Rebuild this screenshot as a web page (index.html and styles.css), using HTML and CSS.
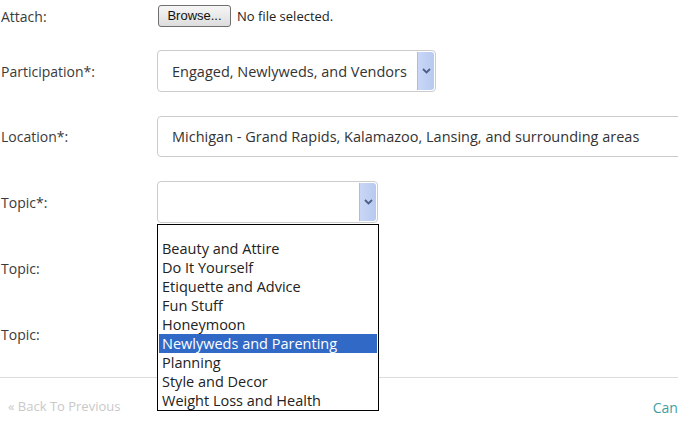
FILE: index.html
```html
<!DOCTYPE html>
<html lang="en">
<head>
    <meta charset="UTF-8">
    <title>Submit a Question</title>
    <link rel="stylesheet" href="styles.css">
</head>
<body>
    <div class="page">
        <form class="form">
            <div class="row row-attach">
                <label class="label">Attach:</label>
                <div class="file">
                    <span class="browse-btn">Browse...</span>
                    <span class="file-name">No file selected.</span>
                </div>
            </div>

            <div class="row">
                <label class="label">Participation*:</label>
                <div class="select select-participation">
                    <span class="select-value">Engaged, Newlyweds, and Vendors</span>
                    <span class="select-arrow">
                        <svg width="9" height="6" viewBox="0 0 9 6"><path d="M1 1 L4.5 4.5 L8 1" fill="none" stroke="#4b5f86" stroke-width="1.8"/></svg>
                    </span>
                </div>
            </div>

            <div class="row row-location">
                <label class="label">Location*:</label>
                <div class="input input-location">Michigan - Grand Rapids, Kalamazoo, Lansing, and surrounding areas</div>
            </div>

            <div class="row">
                <label class="label">Topic*:</label>
                <div class="topic-wrap">
                    <div class="select select-topic">
                        <span class="select-value"></span>
                        <span class="select-arrow">
                            <svg width="9" height="6" viewBox="0 0 9 6"><path d="M1 1 L4.5 4.5 L8 1" fill="none" stroke="#4b5f86" stroke-width="1.8"/></svg>
                        </span>
                    </div>
                    <ul class="dropdown">
                        <li class="empty"></li>
                        <li>Beauty and Attire</li>
                        <li>Do It Yourself</li>
                        <li>Etiquette and Advice</li>
                        <li>Fun Stuff</li>
                        <li>Honeymoon</li>
                        <li class="active">Newlyweds and Parenting</li>
                        <li>Planning</li>
                        <li>Style and Decor</li>
                        <li>Weight Loss and Health</li>
                    </ul>
                </div>
            </div>

            <div class="row">
                <label class="label">Topic:</label>
                <div class="select select-topic"></div>
            </div>

            <div class="row">
                <label class="label">Topic:</label>
                <div class="select select-topic"></div>
            </div>
        </form>

        <div class="footer">
            <a class="back-link">&laquo; Back To Previous</a>
            <a class="cancel-link">Cancel</a>
        </div>
    </div>
</body>
</html>
```

FILE: styles.css
```css
* {
    margin: 0;
    padding: 0;
    box-sizing: border-box;
}

body {
    font-family: 'Open Sans', 'Noto Sans', sans-serif;
    font-size: 14px;
    color: #333333;
    background: #ffffff;
    overflow: hidden;
}

.page {
    width: 740px;
}

.form {
    padding-top: 5px;
}

.row {
    display: grid;
    grid-template-columns: 157px 1fr;
    align-items: center;
    height: 42px;
    margin-bottom: 24px;
}

.row-attach {
    height: 22px;
    margin-bottom: 23px;
}

.row-location {
    height: 41px;
}

.label {
    padding-left: 1px;
    color: #3a3a3a;
}

.file {
    display: flex;
    align-items: center;
    gap: 6px;
}

.browse-btn {
    display: inline-block;
    margin-left: 1px;
    width: 73px;
    height: 22px;
    line-height: 20px;
    text-align: center;
    font-family: 'Liberation Sans', Arial, sans-serif;
    font-size: 13px;
    color: #111111;
    background: linear-gradient(#f6f6f6, #dddddd);
    border: 1px solid #707070;
    border-radius: 3px;
}

.file-name {
    font-size: 13px;
    color: #222222;
}

.select,
.input {
    position: relative;
    height: 42px;
    border: 1px solid #cccccc;
    border-radius: 4px;
    background: #ffffff;
    display: flex;
    align-items: center;
    padding-left: 14px;
    font-size: 14.5px;
    color: #333333;
    white-space: nowrap;
}

.input {
    height: 41px;
}

.select-participation {
    width: 279px;
}

.select-topic {
    width: 221px;
}

.input-location {
    width: 583px;
}

.select-value {
    flex: 1;
}

.select-arrow {
    align-self: stretch;
    width: 17px;
    margin: 1px 1px 1px 0;
    display: flex;
    align-items: center;
    justify-content: center;
    background: linear-gradient(90deg, #c9d7f6, #b7c9f1);
    border-left: 1px solid #a8bce9;
    border-radius: 0 3px 3px 0;
}

.topic-wrap {
    position: relative;
}

.dropdown {
    position: absolute;
    top: 43px;
    left: 0;
    width: 222px;
    list-style: none;
    background: #ffffff;
    border: 1px solid #000000;
    padding: 0 1px;
    font-size: 14.5px;
    z-index: 5;
}

.dropdown li {
    height: 19px;
    line-height: 19px;
    padding-left: 3px;
    color: #222222;
}

.dropdown li.empty {
    height: 14px;
}

.dropdown li.active {
    background: #3169c6;
    color: #ffffff;
}

.footer {
    margin-top: -2px;
    border-top: 1px solid #dcdcdc;
    box-shadow: 0 1px 0 #f2f2f2;
    display: flex;
    align-items: center;
    padding: 16px 44px 0 8px;
    font-size: 13px;
}

.back-link {
    color: #c9c9c9;
}

.cancel-link {
    margin-left: auto;
    margin-top: 4px;
    font-size: 14px;
    color: #3f9ea3;
}
```
